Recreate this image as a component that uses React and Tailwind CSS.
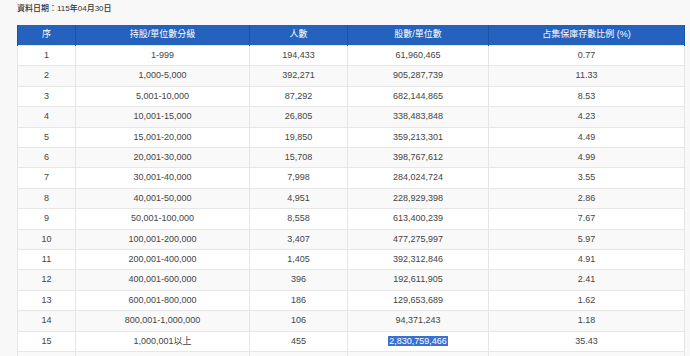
const ROWS = [
  ["1", "1-999", "194,433", "61,960,465", "0.77"],
  ["2", "1,000-5,000", "392,271", "905,287,739", "11.33"],
  ["3", "5,001-10,000", "87,292", "682,144,865", "8.53"],
  ["4", "10,001-15,000", "26,805", "338,483,848", "4.23"],
  ["5", "15,001-20,000", "19,850", "359,213,301", "4.49"],
  ["6", "20,001-30,000", "15,708", "398,767,612", "4.99"],
  ["7", "30,001-40,000", "7,998", "284,024,724", "3.55"],
  ["8", "40,001-50,000", "4,951", "228,929,398", "2.86"],
  ["9", "50,001-100,000", "8,558", "613,400,239", "7.67"],
  ["10", "100,001-200,000", "3,407", "477,275,997", "5.97"],
  ["11", "200,001-400,000", "1,405", "392,312,846", "4.91"],
  ["12", "400,001-600,000", "396", "192,611,905", "2.41"],
  ["13", "600,001-800,000", "186", "129,653,689", "1.62"],
  ["14", "800,001-1,000,000", "106", "94,371,243", "1.18"],
  ["15", "1,000,001以上", "455", "2,830,759,466", "35.43"],
  ["16", "", "", "", ""],
];

const HEADERS = ["序", "持股/單位數分級", "人數", "股數/單位數", "占集保庫存數比例 (%)"];

export default function App() {
  return (
    <div
      className="w-[690px] h-[356px] overflow-hidden bg-[#f8f8f8] text-[#333]"
      style={{ fontFamily: '"Liberation Sans", Arial, "Noto Sans CJK TC", sans-serif' }}
    >
      <p className="pl-[17px] pt-[3px] h-[25px] text-[8px] leading-[12px] font-medium text-[#333]">
        資料日期：115年04月30日
      </p>
      <table className="ml-[17px] w-[668px] table-fixed border-collapse text-[9px]">
        <colgroup>
          <col className="w-[58px]" />
          <col className="w-[174px]" />
          <col className="w-[98px]" />
          <col className="w-[141px]" />
          <col />
        </colgroup>
        <thead>
          <tr className="h-[20.6px] bg-[#2462bd] text-white">
            {HEADERS.map((h) => (
              <th key={h} className="font-normal border-x border-[#1c52a3] text-center p-0">
                {h}
              </th>
            ))}
          </tr>
        </thead>
        <tbody>
          {ROWS.map((r, i) => (
            <tr
              key={r[0]}
              className={`h-[20.4px] ${i % 2 === 0 ? "bg-white" : "bg-[#f9f9f9]"}`}
            >
              {r.map((c, j) => (
                <td key={j} className="border border-[#e6e6e6] text-center p-0 text-[#444]">
                  {j === 0 && r[0] === "16" ? "" : r[0] === "15" && j === 3 ? (
                    <span className="bg-[#3a6fd3] text-white px-px">{c}</span>
                  ) : (
                    c
                  )}
                </td>
              ))}
            </tr>
          ))}
        </tbody>
      </table>
    </div>
  );
}
